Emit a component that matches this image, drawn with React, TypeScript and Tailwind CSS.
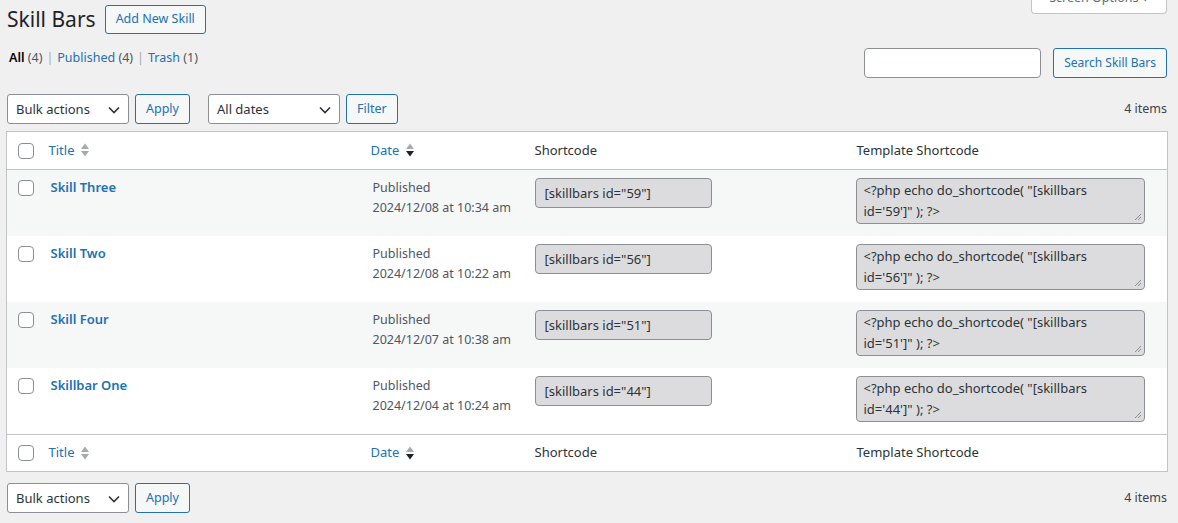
import React from 'react';

const rows = [
  { title: 'Skill Three', date: '2024/12/08 at 10:34 am', id: '59' },
  { title: 'Skill Two', date: '2024/12/08 at 10:22 am', id: '56' },
  { title: 'Skill Four', date: '2024/12/07 at 10:38 am', id: '51' },
  { title: 'Skillbar One', date: '2024/12/04 at 10:24 am', id: '44' },
];

const Checkbox = () => (
  <span className="block w-4 h-4 rounded-[4px] border border-[#8c8f94] bg-white" />
);

const SortIcon = ({ active }: { active?: boolean }) => (
  <svg width="10" height="18" viewBox="0 0 10 18" className="inline-block ml-[6px] -mt-[2px] align-middle">
    <path d="M1 8 L5 2.5 L9 8 Z" fill="#a7aaad" />
    <path d="M1 10 L5 15.5 L9 10 Z" fill={active ? '#1d2327' : '#a7aaad'} />
  </svg>
);

const Chevron = () => (
  <svg width="12" height="8" viewBox="0 0 12 8" className="absolute right-[8px] top-[11px]">
    <path d="M1 1.5 L6 6.5 L11 1.5" fill="none" stroke="#2c3338" strokeWidth="1.6" />
  </svg>
);

const Select = ({ label, w }: { label: string; w: string }) => (
  <div className={`relative h-[30px] ${w} rounded-[3px] border border-[#8c8f94] bg-white pl-2 text-[13px] leading-[28px] text-[#2c3338]`}>
    {label}
    <Chevron />
  </div>
);

const Button = ({ label, className = '' }: { label: string; className?: string }) => (
  <button className={`h-[30px] rounded-[3px] border border-[#2271b1] bg-[#f6f7f7] px-[10px] text-[12.5px] leading-[28px] text-[#2271b1] ${className}`}>
    {label}
  </button>
);

const HeadRow = ({ foot }: { foot?: boolean }) => (
  <tr className={foot ? 'border-t border-[#c3c4c7]' : 'border-b border-[#c3c4c7]'}>
    <td className="pl-[11px] align-middle"><Checkbox /></td>
    <th className="text-left font-normal pl-[8px] text-[#2271b1]">Title<SortIcon /></th>
    <th className="text-left font-normal pl-[8px] text-[#2271b1]">Date<SortIcon active /></th>
    <th className="text-left font-normal pl-[8px] text-[#2c3338]">Shortcode</th>
    <th className="text-left font-normal pl-[8px] text-[#2c3338]">Template Shortcode</th>
  </tr>
);

export default function App() {
  return (
    <div className="min-h-[523px] bg-[#f0f0f1] text-[#3c434a] text-[12.5px]" style={{ fontFamily: '"Segoe UI", "Noto Sans", sans-serif' }}>
      <div className="px-[6px]">
        <div className="flex items-start">
          <div className="flex items-center gap-[9px] pt-[5px] pl-px">
            <h1 className="text-[21px] leading-[29px] text-[#1d2327]">Skill Bars</h1>
            <button className="h-[29px] rounded-[3px] border border-[#2271b1] bg-[#f6f7f7] px-[10px] text-[12.5px] text-[#2271b1]">Add New Skill</button>
          </div>
          <div className="ml-auto mr-[5px] -mt-[13px] h-[27px] w-[136px] rounded-b-[4px] border border-t-0 border-[#c3c4c7] bg-white text-center text-[12.5px] leading-[22px] text-[#646970]">
            Screen Options ▾
          </div>
        </div>

        <div className="flex items-start mt-[13px]">
          <div className="pl-[3px] text-[12.5px] text-[#50575e] pt-[2px]">
            <span className="text-[#000] font-semibold">All</span> <span>(4)</span>
            <span className="mx-[4px] text-[#a7aaad]">|</span>
            <span className="text-[#2271b1]">Published</span> <span>(4)</span>
            <span className="mx-[4px] text-[#a7aaad]">|</span>
            <span className="text-[#2271b1]">Trash</span> <span>(1)</span>
          </div>
          <div className="ml-auto flex gap-[12px] mr-[5px] mt-[1px]">
            <div className="h-[30px] w-[177px] rounded-[4px] border border-[#8c8f94] bg-white" />
            <Button label="Search Skill Bars" className="px-[8px] text-[12px]" />
          </div>
        </div>

        <div className="flex items-center mt-[16px] pl-px pr-[5px]">
          <Select label="Bulk actions" w="w-[122px]" />
          <Button label="Apply" className="ml-[6px]" />
          <div className="ml-[18px]"><Select label="All dates" w="w-[132px]" /></div>
          <Button label="Filter" className="ml-[6px]" />
          <span className="ml-auto text-[12.5px] text-[#3c434a]">4 items</span>
        </div>

        <table className="mt-[7px] w-[1162px] table-fixed border-collapse border border-[#c3c4c7] bg-white text-[13px]">
          <colgroup>
            <col className="w-[34px]" />
            <col className="w-[322px]" />
            <col className="w-[164px]" />
            <col className="w-[322px]" />
            <col />
          </colgroup>
          <thead className="h-[38px]">
            <HeadRow />
          </thead>
          <tbody>
            {rows.map((r, i) => (
              <tr key={r.id} className={`h-[66px] align-top ${i % 2 === 0 ? 'bg-[#f6f7f7]' : 'bg-white'}`}>
                <td className="pl-[11px] pt-[10px]"><Checkbox /></td>
                <td className="pl-[10px] pt-[8px] text-[13px] font-semibold text-[#2271b1]">{r.title}</td>
                <td className="pl-[10px] pt-[8px] text-[12.5px] leading-[20px] text-[#50575e]">
                  <div>Published</div>
                  <div>{r.date}</div>
                </td>
                <td className="pl-[8px] pt-[8px]">
                  <div className="h-[30px] w-[177px] rounded-[4px] border border-[#8c8f94] bg-[#dcdcde] pl-[9px] text-[13px] leading-[28px] text-[#2c3338]">
                    [skillbars id="{r.id}"]
                  </div>
                </td>
                <td className="pl-[7px] pt-[8px] pb-[12px]">
                  <div className="relative h-[46px] w-[289px] rounded-[4px] border border-[#8c8f94] bg-[#dcdcde] pl-[7px] pt-[1px] text-[13px] leading-[21px] text-[#2c3338]">
                    <div>&lt;?php echo do_shortcode( "[skillbars</div>
                    <div>id='{r.id}']" ); ?&gt;</div>
                    <svg width="8" height="8" viewBox="0 0 8 8" className="absolute right-[2px] bottom-[2px]">
                      <path d="M7 1 L1 7 M7 4 L4 7" stroke="#8c8f94" strokeWidth="1" />
                    </svg>
                  </div>
                </td>
              </tr>
            ))}
          </tbody>
          <tfoot className="h-[37px]">
            <HeadRow foot />
          </tfoot>
        </table>

        <div className="flex items-center mt-[11px] pl-px pr-[5px]">
          <Select label="Bulk actions" w="w-[122px]" />
          <Button label="Apply" className="ml-[6px]" />
          <span className="ml-auto text-[12.5px] text-[#3c434a]">4 items</span>
        </div>
      </div>
    </div>
  );
}
